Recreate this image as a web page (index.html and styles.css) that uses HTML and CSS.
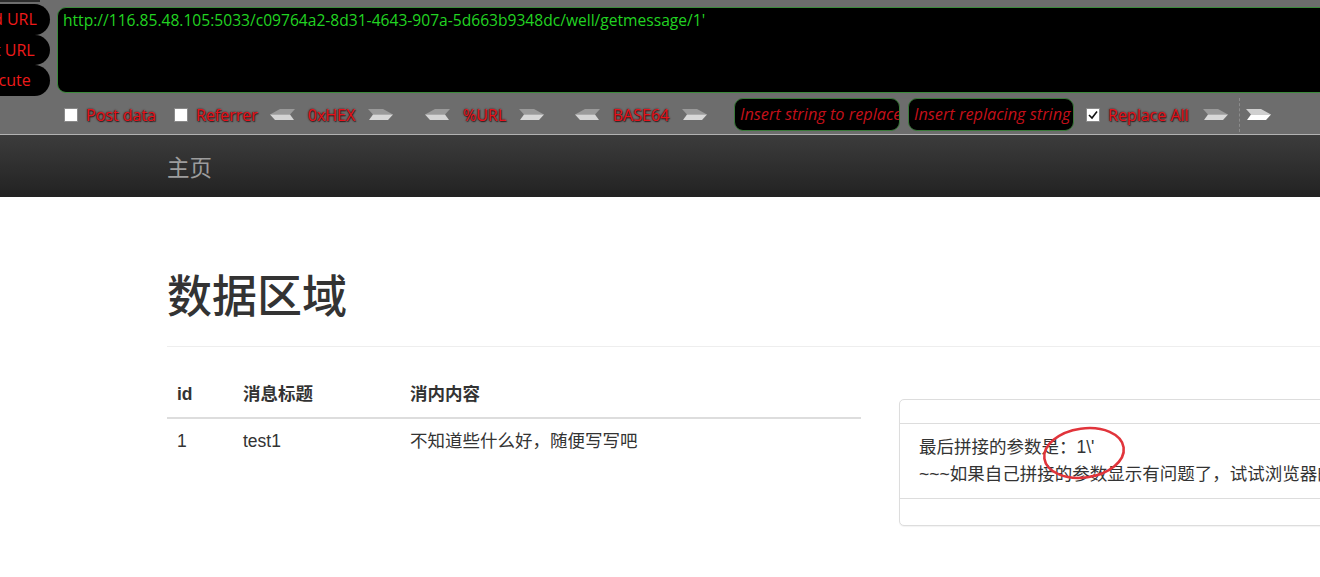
FILE: index.html
```html
<!DOCTYPE html>
<html lang="zh-CN">
<head>
<meta charset="utf-8">
<title>数据区域</title>
<link rel="stylesheet" href="styles.css">
</head>
<body>
<div class="page">
  <div class="toolbar">
    <div class="topline"><span class="topdark"></span></div>
    <div class="row1">
      <div class="btns">
        <div class="pill">Load URL</div>
        <div class="pill">Split URL</div>
        <div class="pill">Execute</div>
      </div>
      <div class="urlbox">http://116.85.48.105:5033/c09764a2-8d31-4643-907a-5d663b9348dc/well/getmessage/1'</div>
    </div>
    <div class="row2">
      <div class="cell cell-post"><span class="cb"></span><span class="lbl">Post data</span></div>
      <div class="cell cell-ref"><span class="cb"></span><span class="lbl">Referrer</span></div>
      <div class="enc enc-hex">
        <svg class="arr" width="25" height="11" viewBox="0 0 25 11"><polygon points="10,0 25,0 20,5.5 0,5.5" fill="#9a9a9a"/><polygon points="0,5.5 20,5.5 24,11 5,11" fill="#d4d4d4"/></svg>
        <span class="lbl enc-lbl w73">0xHEX</span>
        <svg class="arr" width="25" height="11" viewBox="0 0 25 11"><polygon points="0,0 15,0 25,5.5 5,5.5" fill="#9a9a9a"/><polygon points="5,5.5 25,5.5 20,11 1,11" fill="#d8d8d8"/></svg>
      </div>
      <div class="enc enc-url">
        <svg class="arr" width="25" height="11" viewBox="0 0 25 11"><polygon points="10,0 25,0 20,5.5 0,5.5" fill="#9a9a9a"/><polygon points="0,5.5 20,5.5 24,11 5,11" fill="#d4d4d4"/></svg>
        <span class="lbl enc-lbl w69">%URL</span>
        <svg class="arr" width="25" height="11" viewBox="0 0 25 11"><polygon points="0,0 15,0 25,5.5 5,5.5" fill="#9a9a9a"/><polygon points="5,5.5 25,5.5 20,11 1,11" fill="#d8d8d8"/></svg>
      </div>
      <div class="enc enc-b64">
        <svg class="arr" width="25" height="11" viewBox="0 0 25 11"><polygon points="10,0 25,0 20,5.5 0,5.5" fill="#9a9a9a"/><polygon points="0,5.5 20,5.5 24,11 5,11" fill="#d4d4d4"/></svg>
        <span class="lbl enc-lbl w82">BASE64</span>
        <svg class="arr" width="25" height="11" viewBox="0 0 25 11"><polygon points="0,0 15,0 25,5.5 5,5.5" fill="#9a9a9a"/><polygon points="5,5.5 25,5.5 20,11 1,11" fill="#d8d8d8"/></svg>
      </div>
      <div class="field field-1">Insert string to replace</div>
      <div class="field field-2">Insert replacing string</div>
      <div class="cell cell-all"><span class="cb checked"><svg width="12" height="12" viewBox="0 0 12 12"><polyline points="2,6 5,9 10,2.5" fill="none" stroke="#111" stroke-width="1.6"/></svg></span><span class="lbl">Replace All</span></div>
      <svg class="arr" width="25" height="11" viewBox="0 0 25 11"><polygon points="0,0 15,0 25,5.5 5,5.5" fill="#9a9a9a"/><polygon points="5,5.5 25,5.5 20,11 1,11" fill="#d8d8d8"/></svg>
      <span class="sep"></span>
      <svg class="arr" width="25" height="11" viewBox="0 0 25 11"><polygon points="0,0 15,0 25,5.5 5,5.5" fill="#d0d0d0"/><polygon points="5,5.5 25,5.5 20,11 1,11" fill="#ffffff"/></svg>
    </div>
  </div>

  <div class="navbar"><span class="brand">主页</span></div>

  <div class="main">
    <div class="page-header"><h1>数据区域</h1></div>
    <div class="cols">
      <table class="msgs">
        <thead>
          <tr><th class="c-id">id</th><th class="c-title">消息标题</th><th class="c-body">消内内容</th></tr>
        </thead>
        <tbody>
          <tr><td>1</td><td>test1</td><td>不知道些什么好，随便写写吧</td></tr>
        </tbody>
      </table>
      <div class="panel">
        <div class="panel-heading"></div>
        <div class="panel-body">
          <div>最后拼接的参数是：1\'</div>
          <div>~~~如果自己拼接的参数显示有问题了，试试浏览器的开发者工具看看</div>
        </div>
        <div class="panel-footer"></div>
        <svg class="mark" width="96" height="66" viewBox="0 0 96 66"><ellipse cx="48" cy="33" rx="40" ry="24.5" transform="rotate(-8 48 33)" fill="none" stroke="#e1343b" stroke-width="2.6"/></svg>
      </div>
    </div>
  </div>
</div>
</body>
</html>
```

FILE: styles.css
```css
html, body {
  margin: 0;
  padding: 0;
  overflow: hidden;
}
body {
  width: 1320px;
  height: 577px;
  background: #fff;
  color: #333;
  font-family: "Liberation Sans", Arial, "Noto Sans CJK SC", sans-serif;
}
.page {
  width: 1320px;
  height: 577px;
  overflow: hidden;
}

/* ---------- toolbar ---------- */
.toolbar {
  height: 134px;
  background: #6d6d6d;
  border-bottom: 1px solid #b2b2b2;
  font-family: "Open Sans", "Liberation Sans", sans-serif;
  overflow: hidden;
}
.topline {
  height: 4px;
  display: flex;
}
.topdark {
  width: 40px;
  height: 2px;
  background: #2c2c2c;
}
.row1 {
  display: flex;
  height: 92px;
}
.btns {
  width: 50px;
  flex: none;
  display: flex;
  flex-direction: column;
}
.pill {
  margin-left: -47px;
  width: 97px;
  height: 30.6px;
  flex: none;
  background: #000;
  border-radius: 0 16px 16px 0;
  color: #ee1a1a;
  font-size: 16px;
  display: flex;
  align-items: center;
  justify-content: center;
  white-space: nowrap;
}
.urlbox {
  flex: none;
  width: 1300px;
  height: 86px;
  margin: 3px 0 0 7px;
  box-sizing: border-box;
  background: #000;
  border: 1px solid #3b8a3b;
  border-radius: 9px;
  color: #22d322;
  font-size: 15.6px;
  line-height: 20px;
  padding: 2px 5px;
  white-space: nowrap;
}
.row2 {
  height: 37px;
  display: flex;
  align-items: center;
}
.cell {
  display: flex;
  align-items: center;
  flex: none;
}
.cell-post { margin-left: 64px; width: 110px; }
.cell-ref { width: 96px; }
.cell-all { margin-left: 12px; width: 117px; }
.cb {
  width: 14px;
  height: 14px;
  box-sizing: border-box;
  background: #fff;
  border: 1px solid #8a8a8a;
  margin-right: 8px;
  flex: none;
  display: flex;
  align-items: center;
  justify-content: center;
}
.cb svg { display: block; }
.lbl {
  color: #e5121c;
  font-size: 16px;
  text-shadow: 0 0 2px #3a0000, 1px 1px 1px #2a2a2a;
  white-space: nowrap;
}
.enc {
  display: flex;
  align-items: center;
  flex: none;
}
.enc-url { margin-left: 32px; }
.enc-b64 { margin-left: 31px; }
.enc-lbl { text-align: center; }
.w73 { width: 73px; }
.w69 { width: 69px; }
.w82 { width: 82px; }
.arr { display: block; flex: none; }
.field {
  flex: none;
  width: 166px;
  height: 33px;
  box-sizing: border-box;
  background: #000;
  border: 1px solid #3a7a3a;
  border-radius: 9px;
  color: #c4101a;
  font-style: italic;
  font-size: 16.3px;
  line-height: 31px;
  padding: 0 5px;
  white-space: nowrap;
  overflow: hidden;
}
.field-1 { margin-left: 27px; }
.field-2 { margin-left: 8px; }
.sep {
  width: 0;
  height: 34px;
  border-left: 1px dashed #8c8c8c;
  margin: 0 6px 0 11px;
  flex: none;
}

/* ---------- navbar ---------- */
.navbar {
  height: 62px;
  background: linear-gradient(to bottom, #3c3c3c 0%, #222 100%);
  display: flex;
  align-items: center;
}
.brand {
  margin-left: 167px;
  color: #9d9d9d;
  font-size: 22.5px;
  font-family: "Noto Sans CJK SC", sans-serif;
}

/* ---------- main ---------- */
.main {
  padding-left: 167px;
  width: 1500px;
}
.page-header {
  margin: 76px 0 25px;
  padding-bottom: 11px;
  border-bottom: 1px solid #eee;
}
h1 {
  margin: 0 0 12px;
  font-size: 45px;
  font-weight: 500;
  line-height: 49.5px;
  color: #333;
}
.cols {
  display: flex;
  align-items: flex-start;
}
.msgs {
  width: 694px;
  flex: none;
  border-collapse: collapse;
  font-size: 17.5px;
  line-height: 25px;
}
.msgs th {
  text-align: left;
  font-weight: bold;
  padding: 10px;
  border-bottom: 2.5px solid #ddd;
}
.msgs td {
  padding: 10px;
  border-top: 1px solid #ddd;
}
.c-id { width: 46px; }
.c-title { width: 147px; }
.panel {
  position: relative;
  margin-left: 38px;
  margin-top: 27px;
  width: 700px;
  flex: none;
  border: 1px solid #ddd;
  border-radius: 5px;
  background: #fff;
  box-shadow: 0 1px 1px rgba(0,0,0,0.05);
}
.panel-heading {
  height: 23px;
  border-bottom: 1px solid #ddd;
}
.panel-body {
  padding: 10px 19px;
  font-size: 17.5px;
  line-height: 27px;
  white-space: nowrap;
}
.panel-footer {
  height: 26px;
  border-top: 1px solid #ddd;
}
.mark {
  position: absolute;
  left: 136px;
  top: 20px;
}
```
